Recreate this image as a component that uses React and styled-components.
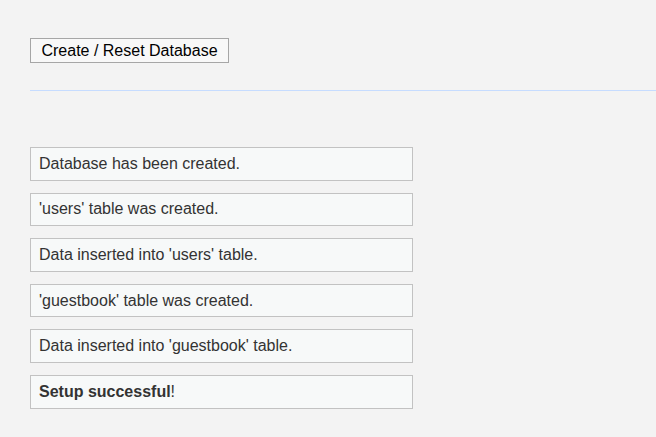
import React from "react";
import styled, { createGlobalStyle } from "styled-components";

const Global = createGlobalStyle`
  html, body { margin: 0; padding: 0; background: #f3f3f3; }
  body { font-family: "Liberation Sans", Arial, sans-serif; color: #333; }
`;

const Page = styled.div`
  padding: 38px 0 0 30px;
  display: flex;
  flex-direction: column;
  align-items: flex-start;
`;

const Button = styled.button`
  font-family: "Liberation Sans", Arial, sans-serif;
  font-size: 16px;
  color: #000;
  width: 199px;
  height: 25px;
  padding: 0 10px;
  background: #f8f8f8;
  border: 1px solid #a6a6a6;
  border-radius: 0;
  cursor: pointer;
`;

const Divider = styled.hr`
  align-self: stretch;
  margin: 27px 0 56px;
  border: 0;
  border-top: 1px solid #c6dcff;
  height: 0;
`;

const List = styled.div`
  display: flex;
  flex-direction: column;
  gap: 12px;
`;

const Message = styled.div`
  box-sizing: border-box;
  width: 383px;
  height: 33.6px;
  display: flex;
  align-items: center;
  padding: 0 8px;
  border: 1px solid #c2c2c2;
  background: #f7f9f9;
  font-size: 16px;
  color: #333;
`;

const Strong = styled.strong`
  font-weight: bold;
`;

const messages = [
  "Database has been created.",
  "'users' table was created.",
  "Data inserted into 'users' table.",
  "'guestbook' table was created.",
  "Data inserted into 'guestbook' table.",
];

export default function App() {
  return (
    <>
      <Global />
      <Page>
        <Button>Create / Reset Database</Button>
        <Divider />
        <List>
          {messages.map((m) => (
            <Message key={m}>{m}</Message>
          ))}
          <Message>
            <Strong>Setup successful</Strong>!
          </Message>
        </List>
      </Page>
    </>
  );
}
